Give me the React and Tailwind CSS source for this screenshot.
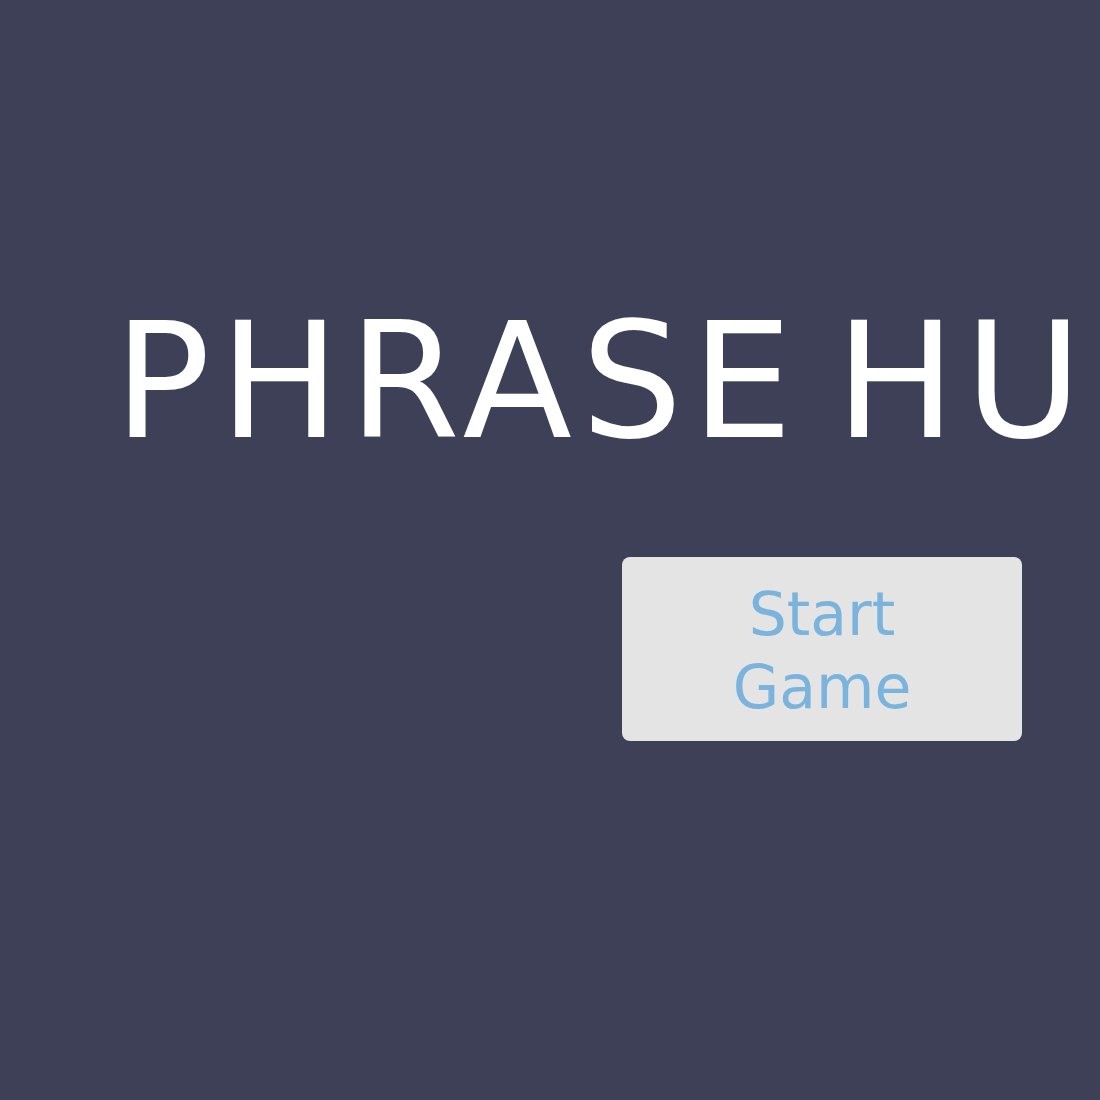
const App = () => {
    return (
        <div className="w-full h-[1100px] overflow-hidden bg-[#3d4057]" style={{ fontFamily: '"DejaVu Sans", sans-serif' }}>
            <div className="w-[1400px] ml-[122px] pt-[302px] flex flex-col items-center">
                <h1 className="self-start -ml-[8px] whitespace-nowrap text-[160px] leading-none font-normal tracking-[9px] [word-spacing:-26px] text-white">
                    PHRASE HUNTER
                </h1>
                <button className="mt-[95px] w-[400px] pt-[21px] pb-[17px] rounded-lg bg-[#e4e4e4] text-[#7ab3dc] text-[60px] leading-[73px]">
                    Start<br />Game
                </button>
            </div>
        </div>
    );
}

export default App;
